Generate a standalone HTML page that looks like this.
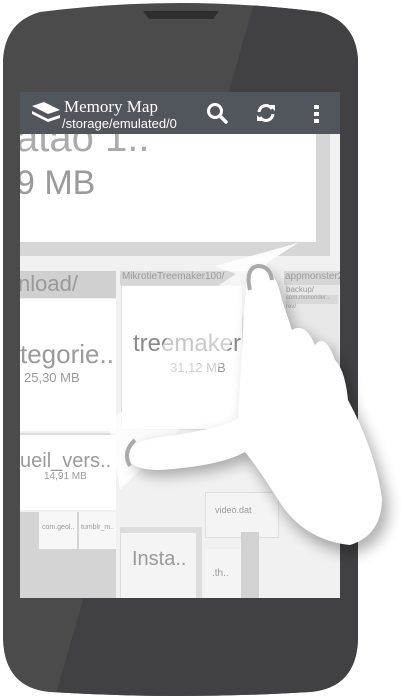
<!DOCTYPE html>
<html><head><style>
body{margin:0;width:401px;height:697px;background:#fff;position:relative;overflow:hidden;font-family:"Liberation Sans",sans-serif}
.a{position:absolute}
.t{color:#9a9a9a;position:absolute;white-space:nowrap}
</style></head><body>
<svg class="a" style="left:0;top:0" width="401" height="697">
<defs><clipPath id="ph"><path d="M3,60 Q5,22 40,12 Q180,-6 320,12 Q356,22 358,60 L358,640 Q356,688 310,692 Q180,700 50,692 Q5,688 3,640 Z"/></clipPath></defs>
<path d="M3,60 Q5,22 40,12 Q180,-6 320,12 Q356,22 358,60 L358,640 Q356,688 310,692 Q180,700 50,692 Q5,688 3,640 Z" fill="#4b4b4c"/>
<path d="M255,0 L401,0 L401,697 L55,697 Z" fill="#414143" clip-path="url(#ph)"/>
<path d="M143,11 L219,11 L213,19 L149,19 Z" fill="#2e2e30"/>
</svg>
<div class="a" style="left:20px;top:92px;width:320px;height:506px;background:#f1f1f1;overflow:hidden">
 <div class="a" style="left:0;top:42px;width:310px;height:122px;background:#d6d6d6"></div>
 <div class="a" style="left:0;top:42px;width:296px;height:108px;background:#fff"></div>
 <div class="t" style="left:-4px;top:24px;font-size:40px;color:#aaa">atao 1..</div>
 <div class="t" style="left:-4px;top:72px;font-size:34px">9 MB</div>
 <div class="a" style="left:0;top:179px;width:96px;height:27px;background:#d0d0d0"></div>
 <div class="t" style="left:-2px;top:179px;font-size:22px;color:#999">nload/</div>
 <div class="a" style="left:0;top:207px;width:96px;height:132px;background:#fff"></div>
 <div class="t" style="left:0;top:247px;font-size:26px">tegorie..</div>
 <div class="t" style="left:4px;top:278px;font-size:13px">25,30 MB</div>
 <div class="a" style="left:100px;top:179px;width:132px;height:14px;background:#d6d6d6"></div>
 <div class="t" style="left:102px;top:179px;font-size:10px">MikrotieTreemaker100/</div>
 <div class="a" style="left:101px;top:193px;width:120px;height:143px;background:#fff;border:1px solid #ddd"></div>
 <div class="t" style="left:113px;top:238px;font-size:24px;color:#8a8a8a">treemaker</div>
 <div class="t" style="left:150px;top:268px;font-size:13px">31,12 MB</div>
 <div class="a" style="left:264px;top:179px;width:56px;height:14px;background:#d6d6d6"></div>
 <div class="t" style="left:265px;top:179px;font-size:10px">appmonster2</div>
 <div class="a" style="left:265px;top:193px;width:54px;height:100px;background:#e8e8e8"></div>
 <div class="t" style="left:266px;top:193px;font-size:8px">backup/</div>
 <div class="a" style="left:266px;top:203px;width:52px;height:9px;background:#d8d8d8"></div>
 <div class="t" style="left:266px;top:203px;font-size:6px">com.monorider..</div>
 <div class="t" style="left:266px;top:212px;font-size:6px">rev/</div>
 <div class="a" style="left:0;top:341px;width:96px;height:75px;background:#fff;border-top:2px solid #ddd"></div>
 <div class="t" style="left:0;top:358px;font-size:20px">ueil_vers..</div>
 <div class="t" style="left:24px;top:379px;font-size:10px">14,91 MB</div>
 <div class="a" style="left:0;top:420px;width:96px;height:86px;background:#d4d4d4"></div>
 <div class="a" style="left:19px;top:420px;width:38px;height:37px;background:#f7f7f7"></div>
 <div class="a" style="left:59px;top:420px;width:37px;height:37px;background:#f7f7f7"></div>
 <div class="t" style="left:22px;top:432px;font-size:7px">com.geol..</div>
 <div class="t" style="left:61px;top:432px;font-size:7px">tumblr_m..</div>
 <div class="a" style="left:100px;top:435px;width:82px;height:71px;background:#ddd"></div>
 <div class="a" style="left:101px;top:441px;width:75px;height:65px;background:#f4f4f4"></div>
 <div class="t" style="left:112px;top:456px;font-size:20px">Insta..</div>
 <div class="a" style="left:185px;top:400px;width:72px;height:44px;background:#f4f4f4;border:1px solid #ddd"></div>
 <div class="t" style="left:195px;top:413px;font-size:9px">video.dat</div>
 <div class="a" style="left:185px;top:457px;width:36px;height:49px;background:#f4f4f4"></div>
 <div class="t" style="left:192px;top:476px;font-size:10px">.th..</div>
 <div class="a" style="left:221px;top:440px;width:18px;height:66px;background:#d2d2d2"></div>
</div>
<div class="a" style="left:20px;top:92px;width:320px;height:42px;background:#51555c"></div>
<svg class="a" style="left:30px;top:100px" width="32" height="26"><path d="M2,6 L14,2 L30,10 L18,14 Z M2,11 L18,19 L30,15 L30,18 L18,22 L2,14 Z" fill="#fff"/></svg>
<div class="a" style="left:64px;top:97px;font-family:'Liberation Serif',serif;font-size:17px;color:#fff">Memory Map</div>
<div class="a" style="left:62px;top:116px;font-size:13px;color:#fff">/storage/emulated/0</div>
<svg class="a" style="left:205px;top:101px" width="24" height="24"><circle cx="10" cy="10" r="6.5" stroke="#fff" stroke-width="3" fill="none"/><path d="M15,15 L21,21" stroke="#fff" stroke-width="3.5" stroke-linecap="round"/></svg>
<svg class="a" style="left:255px;top:102px" width="22" height="22"><path d="M4,10 A7,7 0 0 1 17,7 M18,12 A7,7 0 0 1 5,15" stroke="#fff" stroke-width="3" fill="none"/><path d="M14,3 L20,3 L20,9 Z M8,19 L2,19 L2,13 Z" fill="#fff"/></svg>
<svg class="a" style="left:313px;top:104px" width="8" height="20"><rect x="1" y="1" width="5" height="4" fill="#fff"/><rect x="1" y="8" width="5" height="4" fill="#fff"/><rect x="1" y="15" width="5" height="4" fill="#fff"/></svg>
<svg class="a" style="left:0;top:0" width="401" height="697">
<defs>
<filter id="s"><feGaussianBlur stdDeviation="7"/></filter>
<linearGradient id="g" x1="1" y1="0" x2="0" y2="1"><stop offset="0" stop-color="#fff" stop-opacity="1"/><stop offset="0.5" stop-color="#fff" stop-opacity="0.5"/><stop offset="1" stop-color="#fff" stop-opacity="0.9"/></linearGradient>
</defs>
<path d="M298,243 L215,266 L236,274 Q160,320 140,400 L108,420 L120,490 L150,460 Q200,420 250,300 L268,262 Z" fill="url(#g)"/>
<path d="M258,270 Q275,268 282,300 L292,330 Q305,325 315,345 Q325,335 335,360 Q345,370 348,400 Q375,450 385,500 Q385,540 350,550 Q300,545 275,500 Q255,470 245,455 Q220,468 160,472 Q130,472 130,455 Q132,440 170,438 Q225,430 240,420 Q245,330 248,285 Q250,268 258,270 Z" fill="#000" opacity="0.3" filter="url(#s)" transform="translate(4,4)"/>
<path d="M258,268 Q275,266 282,300 L292,330 Q305,322 315,345 Q325,332 335,360 Q345,370 348,400 Q375,450 382,498 Q382,535 350,545 Q302,540 277,498 Q258,468 245,452 Q220,466 160,470 Q128,470 128,455 Q130,440 168,436 Q225,428 238,418 Q243,330 246,285 Q248,266 258,268 Z" fill="#fff"/>
<path d="M250,290 Q245,268 258,266 Q270,266 272,280" stroke="#aaa" stroke-width="4" fill="none"/>
<path d="M135,440 Q122,452 130,466" stroke="#aaa" stroke-width="4" fill="none"/>
</svg>
</body></html>
